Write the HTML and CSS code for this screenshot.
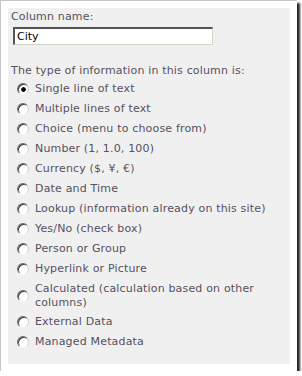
FILE: index.html
```html
<!DOCTYPE html>
<html lang="en">
<head>
    <meta charset="UTF-8">
    <title>Column settings</title>
    <link rel="stylesheet" href="styles.css">
</head>
<body>
    <div class="frame">
        <div class="panel">
            <div class="field-label">Column name:</div>
            <input class="name-input" type="text" value="City">

            <div class="type-label">The type of information in this column is:</div>
            <ul class="type-list">
                <li><label><input type="radio" name="type" checked><span>Single line of text</span></label></li>
                <li><label><input type="radio" name="type"><span>Multiple lines of text</span></label></li>
                <li><label><input type="radio" name="type"><span>Choice (menu to choose from)</span></label></li>
                <li><label><input type="radio" name="type"><span>Number (1, 1.0, 100)</span></label></li>
                <li><label><input type="radio" name="type"><span>Currency ($, ¥, €)</span></label></li>
                <li><label><input type="radio" name="type"><span>Date and Time</span></label></li>
                <li><label><input type="radio" name="type"><span>Lookup (information already on this site)</span></label></li>
                <li><label><input type="radio" name="type"><span>Yes/No (check box)</span></label></li>
                <li><label><input type="radio" name="type"><span>Person or Group</span></label></li>
                <li><label><input type="radio" name="type"><span>Hyperlink or Picture</span></label></li>
                <li class="two-line"><label><input type="radio" name="type"><span>Calculated (calculation based on other columns)</span></label></li>
                <li><label><input type="radio" name="type"><span>External Data</span></label></li>
                <li><label><input type="radio" name="type"><span>Managed Metadata</span></label></li>
            </ul>
        </div>
    </div>
</body>
</html>
```

FILE: styles.css
```css
body {
    margin: 0;
    background-color: white;
    font-family: "DejaVu Sans", Verdana, sans-serif;
    font-size: 11px;
    letter-spacing: 0.17px;
    color: #565060;
}
.frame {
    box-sizing: border-box;
    width: 297px;
    height: 371px;
    padding: 7px;
    background-color: white;
    border-left: 1px solid #c6c6c6;
    border-top: 1px solid #c6c6c6;
    box-shadow: 3px 3px 2px rgba(0,0,0,0.85);
}
.panel {
    box-sizing: border-box;
    height: 100%;
    background-color: #f0f0f0;
    padding: 2px 0 0 3px;
}
.field-label {
    line-height: 14px;
}
.name-input {
    display: block;
    box-sizing: border-box;
    width: 200px;
    height: 18px;
    margin: 3px 0 0 2px;
    padding: 0 2px;
    font-family: "DejaVu Sans", Verdana, sans-serif;
    font-size: 11px;
    color: black;
    background-color: white;
    border: 1px solid;
    border-color: #555 #d8d4c8 #d8d4c8 #555;
    border-top-width: 2px;
    border-left-width: 2px;
    outline: none;
}
.type-label {
    margin-top: 19px;
    line-height: 14px;
}
.type-list {
    list-style: none;
    margin: 4px 0 0 0;
    padding: 0;
    width: 272px;
}
.type-list li {
    margin-bottom: 6px;
}
.type-list li.two-line {
    margin-bottom: 5px;
}
.type-list label {
    display: flex;
    align-items: center;
    line-height: 14px;
}
.type-list input[type=radio] {
    -webkit-appearance: none;
    appearance: none;
    flex: none;
    width: 12px;
    height: 12px;
    margin: 0 6px 0 6px;
    border-radius: 50%;
    border: 1px solid;
    border-color: #6a6a6a #d0d0d0 #f4f4f4 #707070;
    box-shadow: inset 1px 1px 0 #3c3c3c;
    background: white;
    box-sizing: border-box;
}
.type-list input[type=radio]:checked {
    background: radial-gradient(circle at 55% 55%, #000 25%, #fff 34%);
}
```
